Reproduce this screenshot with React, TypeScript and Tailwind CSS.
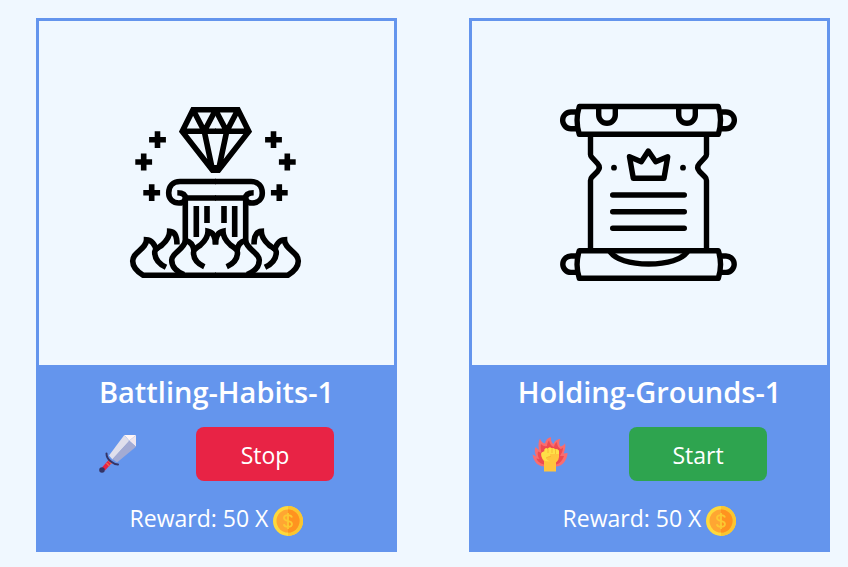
import type { ReactNode } from "react";

function Plus({ x, y }: { x: number; y: number }) {
  return <path d={`M${x - 8.4} ${y}h16.8M${x} ${y - 8.4}v16.8`} />;
}

function PillarHalf() {
  return (
    <g>
      <path d="M90 6.7H67L56.2 28.5L86.5 67.3H90M57 28.3H90M67.2 7L78.3 28.3L89.5 7M78.3 28.3L86.5 67" />
      <Plus x={31.5} y={36.7} />
      <Plus x={17.7} y={59} />
      <Plus x={25.7} y={89.7} />
      <path d="M51.3 89.7C56 89.7 59.3 91 59.3 95H90M59.3 97C57.5 99.5 56 100 53 100C47 100 42.7 96 42.7 90C42.7 83 47 78.5 54 78.5H90" />
      <path d="M59.3 95V141M70.3 103V134M81 103V120" />
      <path d="M90 172.3H17.3C10 168 6.7 163 6.7 158C6.7 149 20.5 146 20.5 136.8C25 137 29.5 141 30 148" />
      <path d="M40 164.3C33 161 28.7 156 28.7 149C29 146 33 144.5 36 142C41.5 137 43.7 133 43.7 128.2C48 128.5 51 132 51 141.5" />
      <path d="M58 171.5C49 168 45.7 163 45.7 157C45.7 150 57.5 147 59.7 137.5C64 138.5 67.5 142 68 148" />
      <path d="M78.3 163.7C71 160.5 67.5 156 67.5 149.5C67.5 146 72 144 74.5 142C79.5 137.5 82 134 82 128.2C86.5 129 89.5 132 89.5 141.5" />
    </g>
  );
}

function PillarArt() {
  return (
    <svg viewBox="0 0 181 180" className="h-[180px] w-[181px]" fill="none" stroke="#000" strokeWidth="5.6" role="img" aria-label="Diamond on a burning pillar">
      <PillarHalf />
      <g transform="translate(179 0) scale(-1 1)">
        <PillarHalf />
      </g>
      <path d="M86 70H93V62H86Z" fill="#000" stroke="none" />
    </svg>
  );
}

function ScrollArt() {
  return (
    <svg viewBox="0 0 181 180" className="h-[180px] w-[181px]" fill="none" stroke="#000" strokeWidth="5.4" strokeLinejoin="round" role="img" aria-label="Royal scroll">
      <path d="M20.3 3.5H159.3Q163.8 17.3 159.3 31.3H20.3Q15.8 17.3 20.3 3.5Z" />
      <path d="M17 9H12a8.3 8.3 0 0 0 0 16.7H17M162.5 9H167a8.3 8.3 0 0 1 0 16.7H162.5" />
      <path d="M39.7 4V12a8.3 8.3 0 0 0 16.6 0V4M119.7 4V12a8.3 8.3 0 0 0 16.6 0V4" />
      <path d="M31.5 31V51.5Q31.5 53 33 54.5L38.5 60.5Q42 64.5 38.5 68.5L33 74Q31.5 75.5 31.5 77.5V148" />
      <path d="M147.5 31V51.5Q147.5 53 146 54.5L140.5 60.5Q137 64.5 140.5 68.5L146 74Q147.5 75.5 147.5 77.5V148" />
      <path d="M70.5 53.7L82.3 58.7L89.3 48L96.7 58.7L108.7 53.7L105 75.3H74.3Z" />
      <path d="M53.7 92H125.3M53.7 108.7H125.3M53.7 125.3H125.3" strokeLinecap="round" />
      <circle cx="55" cy="64.7" r="2.9" fill="#000" stroke="none" />
      <circle cx="124" cy="64.7" r="2.9" fill="#000" stroke="none" />
      <path d="M20.3 147.7H159.3Q163.8 161.5 159.3 175.3H20.3Q15.8 161.5 20.3 147.7Z" />
      <path d="M17 153H12a8.2 8.2 0 0 0 0 16.4H17M162.5 153H167a8.2 8.2 0 0 1 0 16.4H162.5" />
      <path d="M51 148.5C56 156.5 71 161 89.7 161S123.5 156.5 128.5 148.5" />
    </svg>
  );
}

function SwordIcon() {
  return (
    <svg viewBox="0 0 37 40" className="h-10 w-[37px]" fill="none" aria-hidden="true">
      <path d="M25.3 1H37L30.3 6.7Z" fill="#fff5f5" />
      <path d="M37 1V12.7L30.3 6.7Z" fill="#efe6ee" />
      <path d="M25.3 1L30.3 7L13.5 25.5L10 21.5Z" fill="#e0dfec" />
      <path d="M30.3 6.7L37 12.7L18 28.5L13.5 25Z" fill="#a4abd3" />
      <path d="M12 26.5L4.5 35" stroke="#e82345" strokeWidth="4.2" />
      <path d="M7.3 28.8L10.5 32M9.5 26.8L12.5 29.7" stroke="#ef7048" strokeWidth="1.2" />
      <path d="M7.5 19.5Q7.5 24 11.5 27.2T19 30.5" stroke="#343467" strokeWidth="2" strokeLinecap="round" />
      <circle cx="3" cy="36" r="2.8" fill="#343467" />
    </svg>
  );
}

function FistIcon() {
  return (
    <svg viewBox="0 0 37 40" className="h-10 w-[37px]" aria-hidden="true">
      <path d="M12 32.5C6 32.5 1.5 27.5 0.5 20.5L4.5 22.5C2.5 19 2.5 16 3.3 13L7 16C6 11 6.5 7.5 8 4.5C9 7.5 10.5 9 13 9.5C13.5 6 15.5 4 19 3C18.5 6 19.5 8.5 21.5 10C22.5 7 24.5 5.3 28.5 4.7C26.5 8 27 10.5 28.5 12.5C30.5 12 32 11 33 9.3C34 12.5 33 16 31.5 19.5L35.7 19C34.5 27 30.5 32.5 24 32.5Z" fill="#f86d70" />
      <path d="M12 30.5C8 29.5 5 27 4.5 24.5L7.5 25C5.5 22 5.5 20 6 17.5L9.5 19C8.5 15 8.5 12.5 9 10C11 12 12.5 12.5 15 12C15 9.5 16 7.5 17 6.5C18 10.5 19.5 12 22 13C22.5 10.5 23.5 8.5 25 8C25 11.5 26.5 14 28.5 15C30 14.5 30.5 14 31 13.5C31 17 29.5 19.5 28 22L32 22C30.5 26.5 28 29.5 24 30.5Z" fill="#ef4a50" />
      <path d="M12 26H24V37.5H12Z" fill="#ffc53d" />
      <path d="M9.3 20Q9.3 18 12.5 17.5V15.5Q14 13.5 16 15V14.5Q17.5 12.5 20 14.5Q22 13.5 23 15.5Q26 14.5 27 17V23Q27 26 24 28.5H13.5Q9.3 25.5 9.3 20Z" fill="#ffc53d" />
      <path d="M9.3 20Q9.3 18 12.5 17.5V15.5Q14 13.5 16 15Q17.5 12.5 20 14.5Q22 13.5 23 15.5Q26 14.5 27 17V20H18Q19 22 16 23L14 24Q15 27 18 27.5L13 27Q9.3 24 9.3 20Z" fill="#ffe047" />
      <path d="M16 15V19M20 15V19M23.5 16V20M14 24Q16 22.5 19 22.5" stroke="#f5b431" strokeWidth="0.8" fill="none" />
    </svg>
  );
}

function CoinIcon() {
  return (
    <svg viewBox="0 0 30 30" className="size-[30px]" role="img" aria-label="coins">
      <circle cx="15" cy="15" r="15" fill="#ffd93b" />
      <path d="M15 0a15 15 0 0 1 0 30Z" fill="#fbc52f" />
      <circle cx="15" cy="15" r="11.5" fill="#ffa632" />
      <path d="M15 3.5a11.5 11.5 0 0 1 0 23Z" fill="#ff931f" />
      <path d="M19 11.5C18.5 9.7 17 9.2 15 9.2C12.5 9.2 11 10.3 11 12C11 16 19 13.8 19 18C19 19.8 17.5 20.8 15 20.8C12.7 20.8 11.2 20 10.8 18.2M15 7V23" fill="none" stroke="#fcc931" strokeWidth="1.8" />
    </svg>
  );
}

type QuestProps = {
  title: string;
  art: ReactNode;
  icon: ReactNode;
  action: "Start" | "Stop";
  reward: number;
};

function QuestCard({ title, art, icon, action, reward }: QuestProps) {
  const tone = action === "Stop" ? "bg-[#e82345]" : "bg-[#2ea44f]";
  return (
    <article className="border-3 border-[#6495ed] text-white">
      <div className="flex h-[344px] items-center justify-center">{art}</div>
      <div className="flex flex-col items-center bg-[#6495ed] pt-2 pb-[13px]">
        <h2 className="text-[29px] leading-[38px] font-semibold">{title}</h2>
        <div className="mt-4 flex items-center gap-[60px]">
          {icon}
          <button type="button" className={`h-[54px] w-[138px] rounded-lg pt-0.5 text-[23px] ${tone}`}>
            {action}
          </button>
        </div>
        <p className="mt-[25px] flex gap-[5px] text-[23px] leading-6">
          Reward: {reward} X
          <CoinIcon />
        </p>
      </div>
    </article>
  );
}

export default function App() {
  return (
    <main className="grid min-h-screen grid-cols-2 content-start gap-[72px] bg-[#f0f8ff] pt-[18px] pr-[18px] pl-9 font-['Open_Sans','Noto_Sans',sans-serif]">
      <QuestCard title="Battling-Habits-1" art={<PillarArt />} icon={<SwordIcon />} action="Stop" reward={50} />
      <QuestCard title="Holding-Grounds-1" art={<ScrollArt />} icon={<FistIcon />} action="Start" reward={50} />
    </main>
  );
}
